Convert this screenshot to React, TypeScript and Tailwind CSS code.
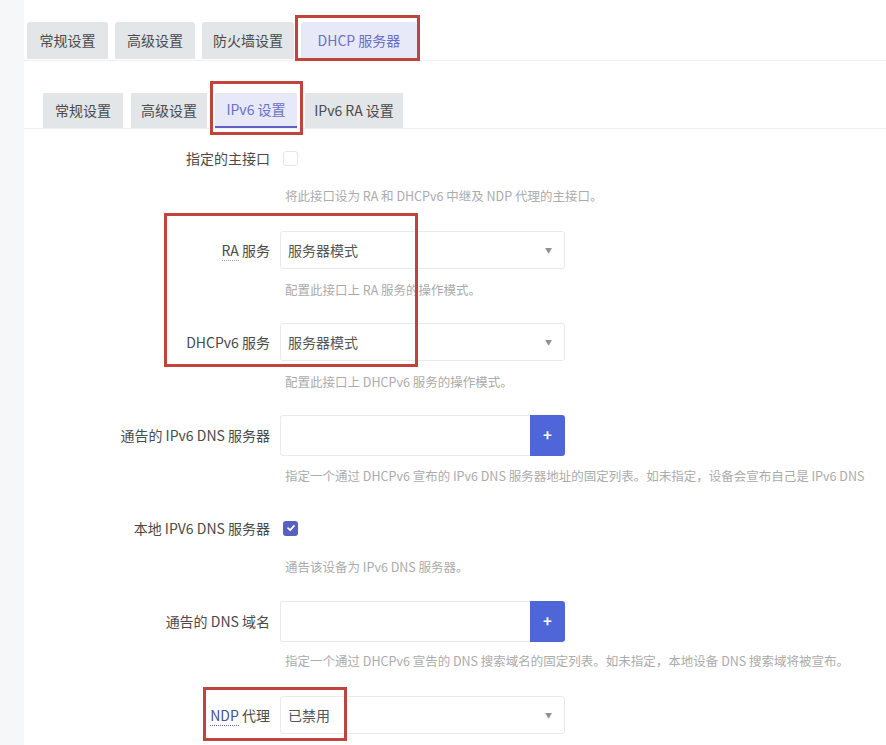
const FONT = { fontFamily: '"Noto Sans CJK SC", "Noto Sans", sans-serif' };

const OUTER_TABS = [
  { label: '常规设置', w: 'w-[81px]' },
  { label: '高级设置', w: 'w-[80px]' },
  { label: '防火墙设置', w: 'w-[92px]' },
  { label: 'DHCP 服务器', w: 'w-[116px]', active: true },
];

const INNER_TABS = [
  { label: '常规设置', w: 'w-[80px]' },
  { label: '高级设置', w: 'w-[76px]' },
  { label: 'IPv6 设置', w: 'w-[82px]', active: true },
  { label: 'IPv6 RA 设置', w: 'w-[98px]' },
];

function Label({ children }: { children: React.ReactNode }) {
  return (
    <div className="w-[280px] shrink-0 pr-[10px] text-right text-[14px] text-[#4a4a4a]">
      {children}
    </div>
  );
}

function Desc({ children, mt = 'mt-[11px]' }: { children: React.ReactNode; mt?: string }) {
  return (
    <div className={`${mt} ml-[285px] h-[18px] whitespace-nowrap text-[12.5px] leading-[18px] text-[#ababab]`}>
      {children}
    </div>
  );
}

function Select({ value }: { value: string }) {
  return (
    <div className="flex h-[38px] w-[285px] items-center justify-between rounded-[3px] border border-[#e9eaec] bg-white pl-[7px] pr-[12px] text-[14px] text-[#555]">
      <span>{value}</span>
      <span className="text-[7px] text-[#8f8f8f]">▼</span>
    </div>
  );
}

function ListInput() {
  return (
    <div className="flex h-[41px] w-[285px]">
      <div className="flex-1 rounded-l-[3px] border border-r-0 border-[#e9eaec] bg-white" />
      <div className="flex w-[35px] items-center justify-center rounded-r-[3px] bg-[#4f66d8] text-[15px] font-bold text-white">
        +
      </div>
    </div>
  );
}

function Checkbox({ checked }: { checked?: boolean }) {
  if (checked) {
    return (
      <div className="ml-[3px] flex h-[15px] w-[15px] items-center justify-center rounded-[3px] bg-[#5a5fc2]">
        <svg viewBox="0 0 12 12" className="h-[10px] w-[10px]" fill="none" stroke="white" strokeWidth="2.2" strokeLinecap="round" strokeLinejoin="round">
          <path d="M2.5 6.2 5 8.6 9.6 3.4" />
        </svg>
      </div>
    );
  }
  return <div className="ml-[3px] h-[15px] w-[15px] rounded-[3px] border border-[#e6e7e9] bg-white" />;
}

export default function App() {
  return (
    <div className="relative flex h-[745px] w-[886px] overflow-hidden bg-[#f6f7f9]" style={FONT}>
      <div className="ml-[24px] flex-1 bg-white">
        {/* outer tabs */}
        <div className="flex h-[61px] items-end gap-[7px] border-b border-[#eef0f3] pb-[1px] pl-[3px]">
          {OUTER_TABS.map(t => (
            <div
              key={t.label}
              className={`${t.w} flex h-[37px] items-center justify-center rounded-t-[3px] text-[14px] ${
                t.active ? 'bg-[#e7e8f8] text-[#6a6fc9]' : 'bg-[#e3e6e9] text-[#4a4a4a]'
              }`}
            >
              {t.label}
            </div>
          ))}
        </div>

        {/* inner tabs */}
        <div className="mt-[31px] flex h-[37px] items-end gap-[8px] border-b border-[#eef0f3] pl-[19px]">
          {INNER_TABS.map(t => (
            <div
              key={t.label}
              className={`${t.w} flex h-[35px] items-center justify-center text-[14px] ${
                t.active
                  ? 'border-b-2 border-[#5d62c0] bg-[#e7e8f8] text-[#6a6fc9]'
                  : 'bg-[#e3e6e9] text-[#4a4a4a]'
              }`}
            >
              {t.label}
            </div>
          ))}
        </div>

        {/* form */}
        <div className="-ml-[24px]">
          <div className="mt-[10px] flex h-[38px] items-center">
            <Label>指定的主接口</Label>
            <Checkbox />
          </div>
          <Desc mt="mt-[10px]">将此接口设为 RA 和 DHCPv6 中继及 NDP 代理的主接口。</Desc>

          <div className="mt-[26px] flex h-[38px] items-center">
            <Label>
              <span className="border-b border-dotted border-[#9a9a9a]">RA</span> 服务
            </Label>
            <Select value="服务器模式" />
          </div>
          <Desc mt="mt-[12px]">配置此接口上 RA 服务的操作模式。</Desc>

          <div className="mt-[24px] flex h-[38px] items-center">
            <Label>DHCPv6 服务</Label>
            <Select value="服务器模式" />
          </div>
          <Desc mt="mt-[12px]">配置此接口上 DHCPv6 服务的操作模式。</Desc>

          <div className="mt-[24px] flex h-[41px] items-center">
            <Label>通告的 IPv6 DNS 服务器</Label>
            <ListInput />
          </div>
          <Desc>指定一个通过 DHCPv6 宣布的 IPv6 DNS 服务器地址的固定列表。如未指定，设备会宣布自己是 IPv6 DNS</Desc>

          <div className="mt-[24px] flex h-[38px] items-center">
            <Label>本地 IPV6 DNS 服务器</Label>
            <Checkbox checked />
          </div>
          <Desc>通告该设备为 IPv6 DNS 服务器。</Desc>

          <div className="mt-[25px] flex h-[40px] items-center">
            <Label>通告的 DNS 域名</Label>
            <ListInput />
          </div>
          <Desc>指定一个通过 DHCPv6 宣告的 DNS 搜索域名的固定列表。如未指定，本地设备 DNS 搜索域将被宣布。</Desc>

          <div className="mt-[26px] flex h-[38px] items-center">
            <Label>
              <span className="border-b border-dotted border-[#5b6aa8] text-[#44528f]">NDP</span> 代理
            </Label>
            <Select value="已禁用" />
          </div>
        </div>
      </div>

      {/* annotation boxes */}
      <div className="pointer-events-none absolute left-[295px] top-[15px] h-[46px] w-[125px] border-[3px] border-[#c0433d]" />
      <div className="pointer-events-none absolute left-[210px] top-[81px] h-[54px] w-[93px] border-[3px] border-[#c0433d]" />
      <div className="pointer-events-none absolute left-[164px] top-[213px] h-[154px] w-[254px] border-[3px] border-[#c0433d]" />
      <div className="pointer-events-none absolute left-[203px] top-[687px] h-[54px] w-[144px] border-[3px] border-[#c0433d]" />
    </div>
  );
}
